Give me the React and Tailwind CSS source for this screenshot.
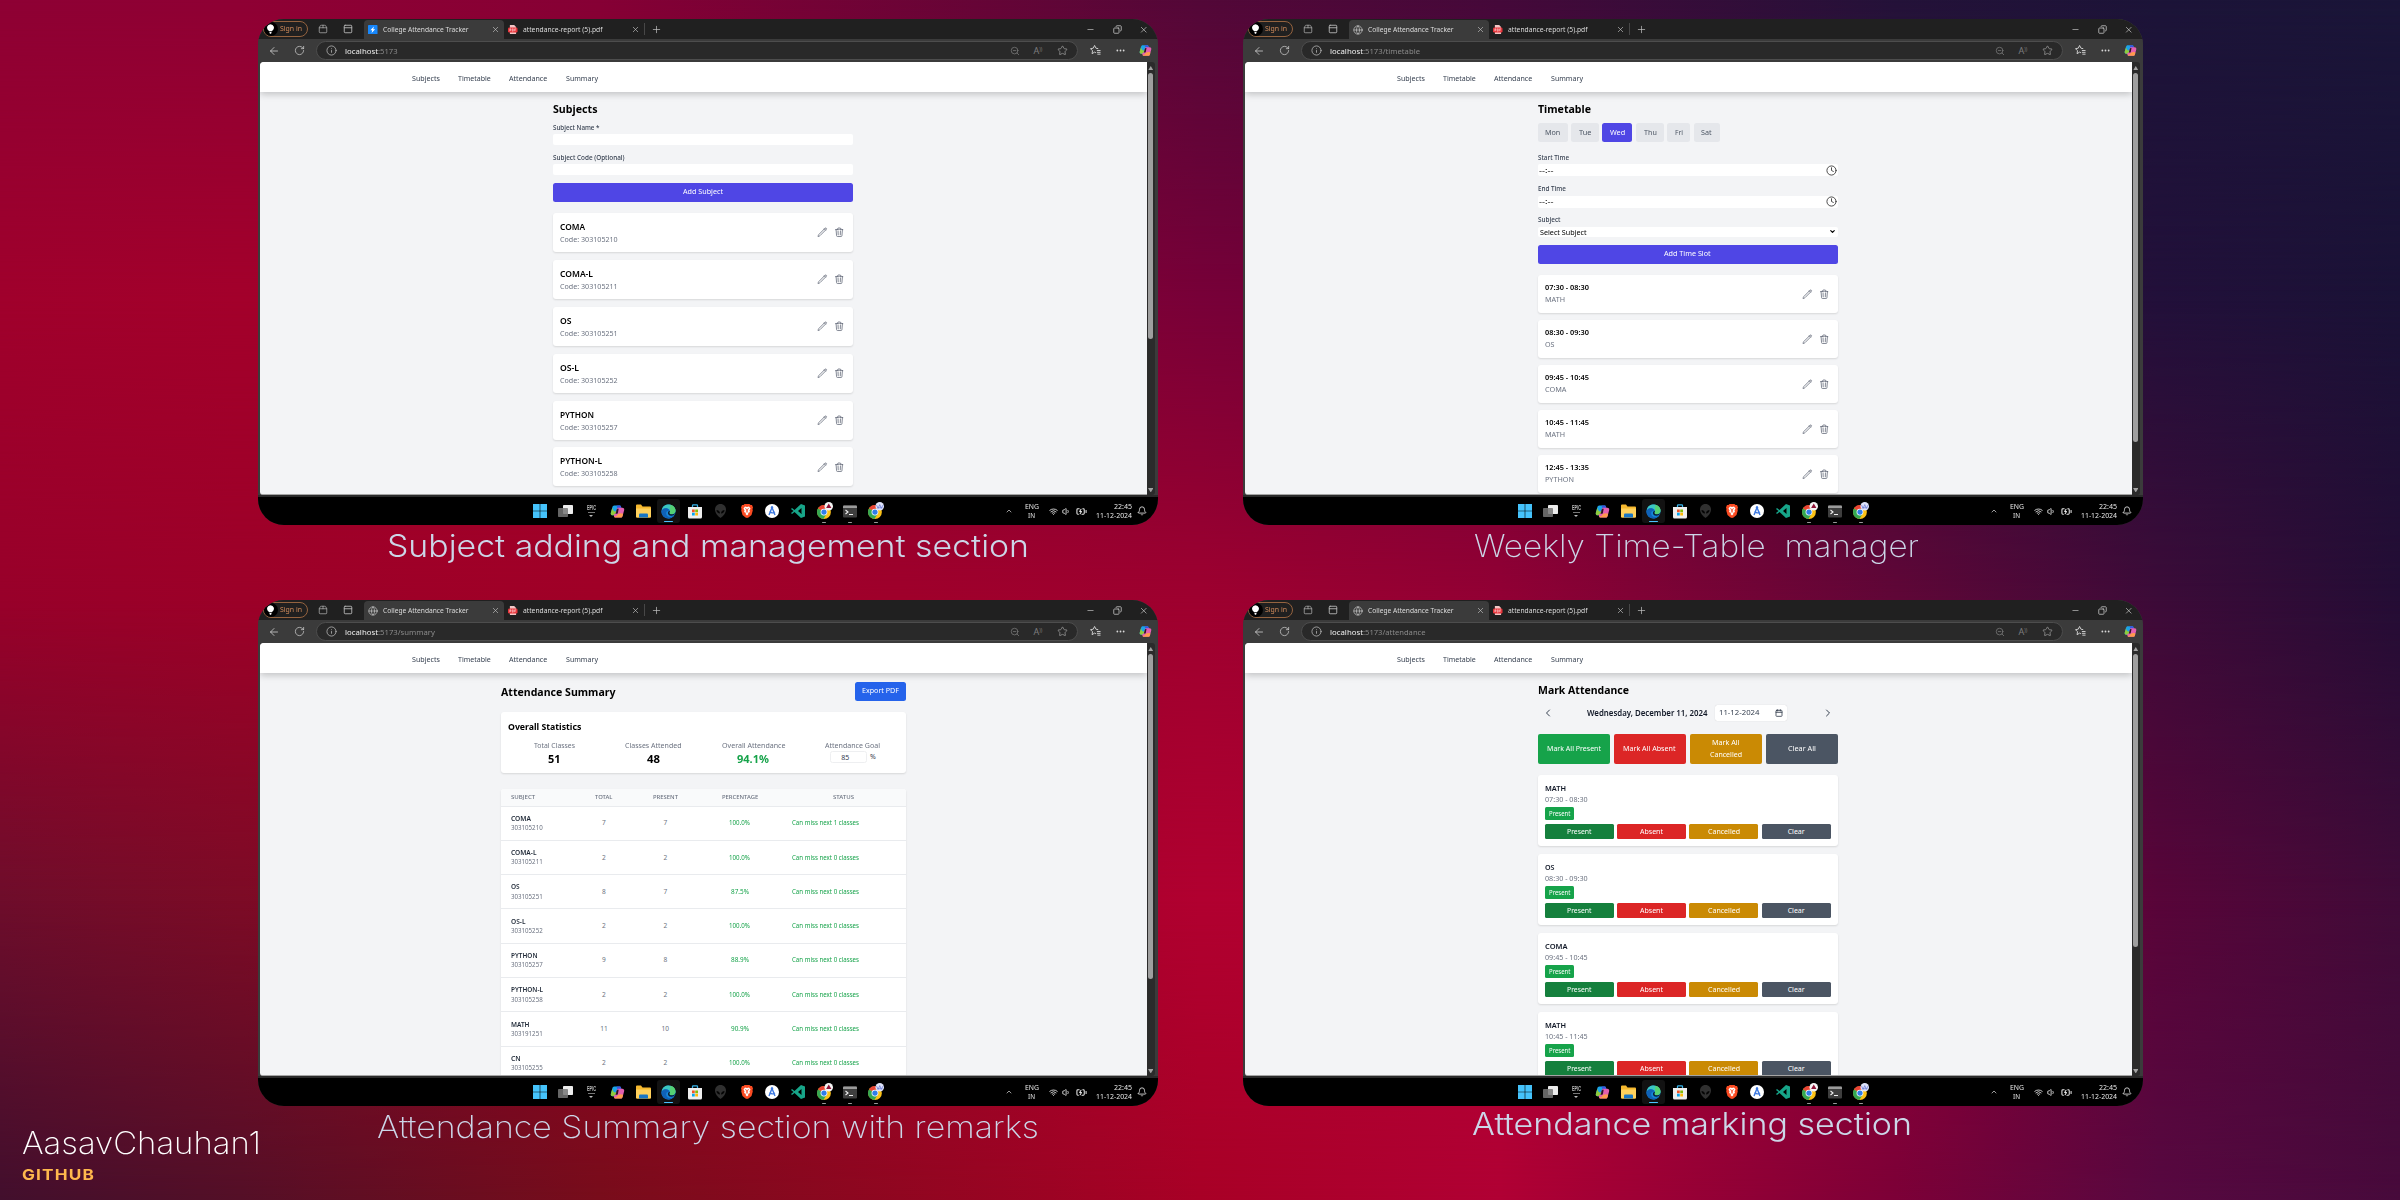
import React, { useLayoutEffect, useRef, useState } from "react";
import {
  ArrowLeft, Calendar, ChevronDown, ChevronLeft, ChevronRight, ChevronUp, Clock, Copy, Globe, Info,
  Minus, Package2, PanelTop, Plus, RotateCw, Star, Volume1, Wifi, X, ZoomOut, BatteryCharging, Bell,
} from "lucide-react";

/* Condenses (or widens) a run of text so that it fills the given width. */
function Fit({ w, className = "", children }) {
  const ref = useRef(null);
  const [scale, setScale] = useState(1);
  useLayoutEffect(() => {
    const el = ref.current;
    const applied = el.style.transform;
    el.style.transform = "none";
    const natural = el.getBoundingClientRect().width;
    el.style.transform = applied;
    setScale(w / natural);
  }, [w, children]);
  return (
    <span className={`inline-block text-left whitespace-pre ${className}`} style={{ width: `${w}px` }}>
      <span ref={ref} className="inline-block origin-left" style={{ transform: `scaleX(${scale})` }}>{children}</span>
    </span>
  );
}

/* ---------- Logos ---------- */

const Chrome = ({ badge }) => (
  <svg viewBox="0 0 32 32" className="size-[17px] overflow-visible">
    <circle cx="15" cy="17" r="13" fill="#fbc116" />
    <path d="M15 17 3.7 10.5A13 13 0 0 1 26.3 10.5L27 11H15Z" fill="#ea4335" />
    <path d="M3.7 10.5A13 13 0 0 0 14 30l6-10-5-3Z" fill="#34a853" />
    <circle cx="15" cy="17" r="6.4" fill="#fff" />
    <circle cx="15" cy="17" r="5" fill="#2f7de9" />
    <circle cx="24" cy="6" r="8" fill={badge === "a" ? "#f4f4f4" : "#dfe4fb"} />
    {badge === "a" ? <path d="m24 1 5 8.5H19Z" fill="#8e1236" /> : <path d="M18 4l3 6 3-7 3 7 3-6M19 9h10" stroke="#6f7fd6" strokeWidth="1.5" fill="none" />}
  </svg>
);

const Edge = () => (
  <svg viewBox="0 0 32 32" className="size-[15px]">
    <circle cx="16" cy="16" r="15" fill="#1585d8" />
    <path d="M1.500 14C3 5 9 1 16 1c9 0 15 6 15 13 0 5-4 8-8 8-3 0-5-1-5-3 0-1 1-2 1-4 0-3-4-6-8-6-5 0-8 3-9.500 5Z" fill="#3bc8c0" />
    <path d="M20 1.600C27 3 31 8 31 14c0 5-4 8-8 8-3 0-5-1-5-3 0-1 1-2 1-4Z" fill="#5fd65a" opacity=".75" />
    <path d="M1 15c2-5 6-6 9-6 4 0 8 2 9 6-5-2-8 1-8 5 0 6 6 9 11 7 2-.5 4-1.500 5-2-3 4-7 6-11 6C8 31 0 24 1 15Z" fill="#0f62b8" />
    <path d="M19 15c0 2-1 3-1 4 0 2 2 3 5 3 3 0 6-1 7-3 0 3-4 6-8 6-5 0-8-4-7-7 .5-2 2-3 4-3Z" fill="#0b1c33" />
  </svg>
);

const Copilot = ({ className }) => (
  <svg viewBox="0 0 32 32" className={className}>
    <path d="M9 3h11c2 0 3 1 3.500 3l1 4h-7c-2 0-3 1-3.500 3l-2 8c-.5 2-2 3-4 3H6c-4 0-5-3-4-6l3-11c.7-2.500 2-4 4-4Z" fill="#1aa3e8" />
    <path d="M5 8 2 18c-1 3 0 6 4 6h2c2 0 3.500-1 4-3l1.500-6C10 18 6 14 5 8Z" fill="#8fcb3c" />
    <path d="M14 3h6c2 0 3 1 3.500 3l1 4h-6c-3-1-4-4-4.500-7Z" fill="#3a55e0" />
    <path d="M23 29H12c-2 0-3-1-3.500-3L8 22c2 0 4-1 4.500-3l2-8c.5-2 2-3 4-3h7.500c4 0 5 3 4 6l-3 11c-.7 2.500-2 4-4 4Z" fill="#e35fb0" />
    <path d="M12 29h11c2 0 3.300-1.500 4-4l1-4c-6-3-12 0-13 3-1 2-4 3-6.500 2 .5 2 1.500 3 3.500 3Z" fill="#ff9a4d" />
    <path d="m14 14 1.500-4h3L17 18l-1 3h-4Z" fill="#000" opacity=".8" />
  </svg>
);

const Task = ({ children, active, dot }) => (
  <div className={`relative flex h-6 w-[23px] shrink-0 items-center justify-center rounded-[3px] ${active ? "bg-[#121212]" : ""}`}>
    {children}
    {active && <span className="absolute bottom-px h-[1.500px] w-[9px] rounded-full bg-[#4cc2ff]" />}
    {dot && <span className="absolute bottom-0 h-[1.500px] w-1 rounded-full bg-[#9a9a9a]" />}
  </div>
);

function Taskbar() {
  return (
    <footer className="flex h-7 items-center bg-black text-[#e8e8e8]">
      <div className="ml-[270.500px] flex items-center gap-[2.880px]">
        <Task>
          <svg viewBox="0 0 14 14" className="size-3.5 fill-[#45c3fb]"><path d="M0 0h6.700v6.700H0ZM7.300 0H14v6.700H7.300ZM0 7.300h6.700V14H0ZM7.300 7.300H14V14H7.300Z" /></svg>
        </Task>
        <Task>
          <svg viewBox="0 0 15 14" className="h-3.5 w-[15px]"><rect x="5" y="1" width="10" height="9" rx=".8" fill="#ececec" /><rect x="0" y="4" width="10" height="9" rx=".8" fill="#777" opacity=".85" /></svg>
        </Task>
        <Task>
          <div className="flex flex-col items-center font-['Liberation_Sans'] text-[#bdbdbd]">
            <span className="text-[6.500px] leading-[6px] font-bold"><Fit w={9}>EPIC</Fit></span>
            <span className="mt-px h-px w-[7px] bg-[#777]" />
            <svg viewBox="0 0 6 3" className="mt-[1.500px] h-[2px] w-1 fill-[#bbb]"><path d="M0 0h6L3 3Z" /></svg>
          </div>
        </Task>
        <Task><Copilot className="size-[15px]" /></Task>
        <Task>
          <svg viewBox="0 0 30 28" className="h-3.5 w-[15px]"><path d="M0 3q0-2 2-2h8l3 4h15q2 0 2 2v18q0 2-2 2H2q-2 0-2-2Z" fill="#f5b82e" /><path d="M0 9h30v16q0 2-2 2H2q-2 0-2-2Z" fill="#ffd15c" /><path d="M6 27v-6q0-2 2-2h14q2 0 2 2v6Z" fill="#1976c5" /></svg>
        </Task>
        <Task active><Edge /></Task>
        <Task>
          <svg viewBox="0 0 28 30" className="h-[15px] w-3.5"><path d="M9 7V3q0-1.500 1.500-1.500h7Q19 1.500 19 3v4" stroke="#37b4ea" strokeWidth="2.500" fill="none" /><path d="M0 6h28v20q0 3-3 3H3q-3 0-3-3Z" fill="#eee" /><path d="M8 11h5.500v5.500H8Z" fill="#f35325" /><path d="M14.500 11H20v5.500h-5.500Z" fill="#81bc06" /><path d="M8 17.500h5.500V23H8Z" fill="#05a6f0" /><path d="M14.500 17.500H20V23h-5.500Z" fill="#ffba08" /></svg>
        </Task>
        <Task>
          <svg viewBox="0 0 22 28" className="h-3.5 w-[11px]"><path d="M11 0C4 0 0 5 0 11c0 7 6 14 11 17 5-3 11-10 11-17C22 5 18 0 11 0Z" fill="#303030" /><path d="M3 12c4 0 7 3 7 7-4 0-7-3-7-7ZM19 12c-4 0-7 3-7 7 4 0 7-3 7-7Z" fill="#050505" /></svg>
        </Task>
        <Task>
          <svg viewBox="0 0 24 28" className="h-3.5 w-3"><path d="m5 2 2-2h10l2 2h3l2 5-1 3 .5 3L21 22l-6 5-3 1-3-1-6-5L.5 13 1 10 0 7l2-5Z" fill="#fb4b22" /><path d="m12 6 4-1 3 4-2 4 1 3-4 2 1 2-3 3-3-3 1-2-4-2 1-3-2-4 3-4Z" fill="#fff" /><path d="m8 9 3 1v4l1 3 1-3v-4l3-1" stroke="#fb4b22" strokeWidth="1.400" fill="none" /></svg>
        </Task>
        <Task>
          <svg viewBox="0 0 28 28" className="size-3.5"><circle cx="14" cy="14" r="14" fill="#fff" /><path d="m8 22 6-15 6 15M9 15q5 5 11 1" stroke="#3c78e0" strokeWidth="2.800" fill="none" /><circle cx="14" cy="7" r="2.400" fill="#3c78e0" /></svg>
        </Task>
        <Task>
          <svg viewBox="0 0 28 28" className="size-3.5"><path d="m20 0 8 3v22l-8 3L7 16l-5 4-2-2 5-4-5-4 2-2 5 4Zm1 8-7 6 7 6Z" fill="#17a589" fillRule="evenodd" /></svg>
        </Task>
        <Task dot><Chrome badge="a" /></Task>
        <Task dot>
          <svg viewBox="0 0 28 26" className="h-[13px] w-3.5"><rect width="28" height="24" y="1" rx="2" fill="#3e3e3e" /><path d="M0 6V3q0-2 2-2h24q2 0 2 2v3Z" fill="#9b9b9b" /><path d="m5 10 5 4-5 4M12 19h8" stroke="#eee" strokeWidth="2.200" fill="none" /></svg>
        </Task>
        <Task dot><Chrome badge="b" /></Task>
      </div>
      <div className="ml-auto flex items-center pr-[11px] text-[7px] leading-[9.500px]">
        <ChevronUp className="mr-[10.500px] size-2" />
        <div className="mr-[9px] flex w-4 flex-col items-center"><Fit w={14}>ENG</Fit><Fit w={7}>IN</Fit></div>
        <Wifi className="mr-1 size-[9px]" strokeWidth={2.300} />
        <Volume1 className="mr-[5.500px] size-[9px]" strokeWidth={2.300} />
        <BatteryCharging className="mr-[9px] size-[11px]" strokeWidth={2.300} />
        <div className="mr-[4.300px] flex flex-col items-end"><Fit w={18}>22:45</Fit><Fit w={36}>11-12-2024</Fit></div>
        <Bell className="size-[10px]" />
      </div>
    </footer>
  );
}

/* ---------- Browser window ---------- */

const Tab = ({ icon, title, w, active }) => (
  <div className={`flex h-[19px] w-[140px] items-center pl-1 ${active ? "rounded-t-[4px] bg-[#3b3b3b] text-[#dcdcdc]" : "text-[#dcdcdc]"}`}>
    <span className="flex size-[10px] items-center justify-center">{icon}</span>
    <span className="ml-[4.500px] text-[7px] leading-[10px]"><Fit w={w}>{title}</Fit></span>
    <X className="mr-1 ml-auto size-[9px] text-[#c4c4c4]" strokeWidth={1.7} />
  </div>
);

function BrowserChrome({ path, pathWidth, bolt }) {
  return (
    <header className="bg-[#3b3b3b]">
      <div className="flex h-5 items-end bg-[#202020]">
        <div className="mb-[2px] ml-[5px] flex h-4 w-[45.500px] items-center rounded-full border border-[#94633f] text-[7px] text-[#d08b5b]">
          <span className="flex size-[14px] shrink-0 items-center justify-center rounded-full bg-black">
            <svg viewBox="0 0 8 11" className="h-[10px] w-[7px] fill-white"><path d="M4 0a4 4 0 0 0-2.300 7.200L2.500 8h3l.8-.8A4 4 0 0 0 4 0ZM2.700 8.800h2.600L4.700 11H3.300Z" /></svg>
          </span>
          <span className="ml-[2.500px] leading-[10px]"><Fit w={22}>Sign in</Fit></span>
        </div>
        <div className="mb-[5px] ml-[10px] flex gap-[14.500px] text-[#b5b5b5]">
          <Package2 className="size-[10px]" strokeWidth={1.7} />
          <PanelTop className="size-[10px]" strokeWidth={2.2} />
        </div>
        <div className="ml-[11.500px] flex">
          <Tab
            active
            w={85.5}
            title="College Attendance Tracker"
            icon={bolt
              ? <svg viewBox="0 0 20 20" className="size-[9.500px]"><rect width="20" height="20" rx="1.500" fill="#1787fb" /><path d="M12.500 3 5 11h4l-1.500 6L15 9h-4Z" fill="#fff" /></svg>
              : <Globe className="size-[10px] text-[#cfcfcf]" strokeWidth={1.6} />}
          />
          <Tab
            w={79.5}
            title="attendance-report (5).pdf"
            icon={<svg viewBox="0 0 20 20" className="size-[9.500px]"><path d="M4 0h9l4 4v16H4Z" fill="#f3c6c6" /><rect x="0" y="5" width="20" height="11" rx="3" fill="#e8353b" /><path d="M4 8v5m0-5h2v3H4M9 8v5h2V8ZM14 13V8h3m-3 2.500h2.500" stroke="#fff" fill="none" /></svg>}
          />
        </div>
        <span className="mb-1 h-3 w-px bg-[#474747]" />
        <Plus className="mb-[4.500px] ml-1.5 size-[11px] text-[#c4c4c4]" strokeWidth={1.5} />
        <div className="mb-[5px] ml-auto flex gap-[17.500px] pr-[9px] text-[#cfcfcf]">
          <Minus className="size-[9px]" strokeWidth={1.700} />
          <Copy className="size-[9px] -scale-x-100" strokeWidth={2} />
          <X className="size-[9.500px]" strokeWidth={1.700} />
        </div>
      </div>
      <div className="flex h-[23px] items-center">
        <ArrowLeft className="ml-[10px] size-3 text-[#cfcfcf]" strokeWidth={1.6} />
        <RotateCw className="ml-3.5 size-[11px] text-[#cfcfcf]" strokeWidth={1.6} />
        <div className="ml-[11.500px] flex h-[19px] w-[762px] items-center rounded-full border border-[#4d4d4d] bg-[#292929] pl-[9px] text-[7.500px] leading-[12px]">
          <Info className="size-[11px] text-[#b9b9b9]" strokeWidth={1.700} />
          <span className="ml-[7.500px] text-[#f1f1f1]"><Fit w={33}>localhost</Fit></span>
          <span className="text-[#8a8a8a]"><Fit w={pathWidth}>{path}</Fit></span>
          <span className="mr-[9px] ml-auto flex items-center gap-[13.500px] text-[#7d7d7d]">
            <ZoomOut className="size-[10px]" strokeWidth={1.8} />
            <span className="flex w-[10px] text-[9px] leading-[10px]">A<span className="text-[5px] leading-[6px]">))</span></span>
            <Star className="size-[11px] text-[#9a9a9a]" strokeWidth={1.7} />
          </span>
        </div>
        <svg viewBox="0 0 24 24" className="ml-[11.500px] size-[11px] fill-none stroke-[#d8d8d8] stroke-2"><path d="m13 17-3-1.500L4.500 19l1-6.500L1 8l6-1 3-6 3 6 5 1M15 12h8M15 16h8M16 20h7" /></svg>
        <svg viewBox="0 0 10 3" className="ml-[15px] h-[3px] w-[9px] fill-[#d8d8d8]"><circle cx="1.500" cy="1.500" r="1" /><circle cx="5" cy="1.500" r="1" /><circle cx="8.500" cy="1.500" r="1" /></svg>
        <Copilot className="ml-[14px] size-[13px]" />
      </div>
    </header>
  );
}

function Window({ path, pathWidth, bolt, thumb, children }) {
  return (
    <section className="h-[506px] w-[900px] overflow-hidden rounded-[26px] bg-[#3b3b3b]">
      <BrowserChrome path={path} pathWidth={pathWidth} bolt={bolt} />
      <div className="flex h-[433px] pr-[3px] pl-[2.500px]">
        <main className="flex w-[886.500px] flex-col overflow-hidden rounded-tl-[4px] rounded-bl-[3px] border-b border-[#a5a5a5] bg-[#f3f4f6]">
          <nav className="z-10 flex h-[30px] shrink-0 items-center gap-[18.500px] bg-white pt-[3px] pl-[151.500px] text-[7.500px] text-[#374151] shadow-[0_2px_7px_rgba(0,0,0,0.22)]">
            <Fit w={28}>Subjects</Fit>
            <Fit w={32.8}>Timetable</Fit>
            <Fit w={38.2}>Attendance</Fit>
            <Fit w={32}>Summary</Fit>
          </nav>
          {children}
        </main>
        <aside className="flex w-2 flex-col items-center rounded-r-[3px] bg-[#2b2b2b] pt-[3.500px]">
          <svg viewBox="0 0 6 5" className="h-[4.500px] w-[5.500px] shrink-0 fill-[#a3a3a3]"><path d="M3 0 6 5H0Z" /></svg>
          <span className={`mt-[3px] w-[5px] rounded-full bg-[#9f9f9f] ${thumb}`} />
          <svg viewBox="0 0 6 5" className="mt-auto mb-[3px] h-[4.500px] w-[5.500px] shrink-0 fill-[#a3a3a3]"><path d="M3 5 6 0H0Z" /></svg>
        </aside>
      </div>
      <div className="h-[2px] bg-[#2a2a2a]" />
      <Taskbar />
    </section>
  );
}

/* ---------- Screens ---------- */

const Actions = () => (
  <span className="flex gap-[6.500px] pr-px text-[#6b7280]">
    <svg viewBox="0 0 24 24" className="size-[10.500px] fill-none stroke-current stroke-[1.900]" strokeLinecap="round" strokeLinejoin="round">
      <path d="m16.862 4.487 1.687-1.688a1.875 1.875 0 1 1 2.652 2.652L6.832 19.820a4.500 4.500 0 0 1-1.897 1.130l-2.685.8.8-2.685a4.500 4.500 0 0 1 1.130-1.897L16.863 4.487Zm0 0L19.500 7.125" />
    </svg>
    <svg viewBox="0 0 24 24" className="size-[10.500px] fill-none stroke-current stroke-[1.900]" strokeLinecap="round" strokeLinejoin="round">
      <path d="m14.740 9-.346 9m-4.788 0L9.260 9m9.968-3.210c.342.052.682.107 1.022.166m-1.022-.165L18.160 19.673a2.250 2.250 0 0 1-2.244 2.077H8.084a2.250 2.250 0 0 1-2.244-2.077L4.772 5.790m14.456 0a48.108 48.108 0 0 0-3.478-.397m-12 .562c.340-.059.680-.114 1.022-.165m0 0a48.110 48.110 0 0 1 3.478-.397m7.500 0v-.916c0-1.180-.910-2.164-2.090-2.201a51.964 51.964 0 0 0-3.320 0c-1.180.037-2.090 1.022-2.090 2.201v.916m7.500 0a48.667 48.667 0 0 0-7.500 0" />
    </svg>
  </span>
);

const card = "rounded-[3px] bg-white shadow-[0_1px_2px_rgba(0,0,0,0.12)]";

const subjects = [
  ["COMA", 25, "303105210"], ["COMA-L", 33, "303105211"], ["OS", 11.5, "303105251"],
  ["OS-L", 19, "303105252"], ["PYTHON", 34, "303105257"], ["PYTHON-L", 42, "303105258"],
];

const SubjectsScreen = () => (
  <div className="ml-[292.500px] w-[300.500px]">
    <h1 className="mt-[9px] h-[15px] text-[11.250px] leading-[15px] font-bold text-black"><Fit w={44.5}>Subjects</Fit></h1>
    <div className="mt-[6.500px] h-[9.500px] text-[6.560px] leading-[9.500px] font-medium text-[#374151]"><Fit w={46.5}>Subject Name *</Fit></div>
    <div className="mt-[2px] h-[11px] rounded-[2px] bg-white" />
    <div className="mt-[7.500px] h-[9.500px] text-[6.560px] leading-[9.500px] font-medium text-[#374151]"><Fit w={71.5}>Subject Code (Optional)</Fit></div>
    <div className="mt-[2px] h-[11px] rounded-[2px] bg-white" />
    <button className="mt-[7.500px] flex h-[19px] w-full items-center justify-center rounded-[2.500px] bg-[#4f46e5] text-[7.500px] text-white"><Fit w={40}>Add Subject</Fit></button>
    <ul className="mt-[11.500px] flex flex-col gap-[7.900px]">
      {subjects.map(([name, w, code]) => (
        <li key={name} className={`flex h-[39px] items-center justify-between px-[7.500px] ${card}`}>
          <div>
            <div className="text-[8.440px] leading-[13px] font-semibold text-black"><Fit w={w}>{name}</Fit></div>
            <div className="text-[7.500px] leading-[12px] text-[#6b7280]"><Fit w={57.7}>{`Code: ${code}`}</Fit></div>
          </div>
          <Actions />
        </li>
      ))}
    </ul>
  </div>
);

const days = [["Mon", 15.3], ["Tue", 12.4], ["Wed", 15.2], ["Thu", 12.8], ["Fri", 8], ["Sat", 10.6]];
const slots = [
  ["07:30 - 08:30", "MATH", 20], ["08:30 - 09:30", "OS", 9.5], ["09:45 - 10:45", "COMA", 21.5],
  ["10:45 - 11:45", "MATH", 20], ["12:45 - 13:35", "PYTHON", 29],
];

const TimeField = ({ label, w }) => (
  <>
    <div className="h-[9.500px] text-[6.560px] leading-[9.500px] font-medium text-[#374151]"><Fit w={w}>{label}</Fit></div>
    <div className="mt-[2px] mb-2 flex h-[12px] items-center justify-between rounded-[2px] bg-white px-px text-[7.500px] leading-[11px] text-black">
      <Fit w={14.5}>--:--</Fit>
      <Clock className="size-[11px] text-[#333]" strokeWidth={1.900} />
    </div>
  </>
);

const TimetableScreen = () => (
  <div className="ml-[292.500px] w-[300.500px]">
    <h1 className="mt-[9px] h-[15px] text-[11.250px] leading-[15px] font-bold text-black"><Fit w={53}>Timetable</Fit></h1>
    <div className="mt-[6.500px] mb-[11px] flex gap-[3.550px]">
      {days.map(([day, w]) => (
        <button key={day} className={`h-[19px] rounded-[2.500px] px-[7.500px] text-[7.500px] leading-[19px] ${day === "Wed" ? "bg-[#4f46e5] text-white" : "bg-[#e5e7eb] text-[#4b5563]"}`}><Fit w={w}>{day}</Fit></button>
      ))}
    </div>
    <TimeField label="Start Time" w={31} />
    <TimeField label="End Time" w={28} />
    <div className="-mt-[0.500px] h-[9.500px] text-[6.560px] leading-[9.500px] font-medium text-[#374151]"><Fit w={22.5}>Subject</Fit></div>
    <div className="mt-[2px] flex h-[10.500px] items-center justify-between rounded-[2px] bg-white px-[2px] text-[7.500px] leading-[10px] text-black">
      <Fit w={46.5}>Select Subject</Fit>
      <ChevronDown className="size-[7px]" strokeWidth={4} />
    </div>
    <button className="mt-[7.500px] flex h-[19px] w-full items-center justify-center rounded-[2.500px] bg-[#4f46e5] text-[7.500px] text-white"><Fit w={46.7}>Add Time Slot</Fit></button>
    <ul className="mt-[11.500px] flex flex-col gap-[7.500px]">
      {slots.map(([time, name, w]) => (
        <li key={time} className={`flex h-[37.500px] items-center justify-between px-[7.500px] ${card}`}>
          <div>
            <div className="text-[7.500px] leading-[11.500px] font-semibold text-black"><Fit w={44}>{time}</Fit></div>
            <div className="text-[7.500px] leading-[11.500px] text-[#6b7280]"><Fit w={w}>{name}</Fit></div>
          </div>
          <Actions />
        </li>
      ))}
    </ul>
  </div>
);

const rows = [
  ["COMA", 20, "303105210", "7", "7", "100.0%", "1"],
  ["COMA-L", 25.5, "303105211", "2", "2", "100.0%", "0"],
  ["OS", 8.7, "303105251", "8", "7", "87.5%", "0"],
  ["OS-L", 14.5, "303105252", "2", "2", "100.0%", "0"],
  ["PYTHON", 26.5, "303105257", "9", "8", "88.9%", "0"],
  ["PYTHON-L", 32, "303105258", "2", "2", "100.0%", "0"],
  ["MATH", 18.5, "303191251", "11", "10", "90.9%", "0"],
  ["CN", 9.7, "303105255", "2", "2", "100.0%", "0"],
];

const cols = "grid grid-cols-[82.300px_42px_80.600px_68.200px_1fr] items-center";

const SummaryScreen = () => (
  <div className="ml-[240.700px] w-[405.500px]">
    <div className="mt-[9px] flex h-[19px] items-center justify-between">
      <h1 className="text-[11.250px] leading-[15px] font-bold text-black"><Fit w={114.5}>Attendance Summary</Fit></h1>
      <button className="-mt-px flex h-[19px] w-[51.700px] items-center justify-center rounded-[2.500px] bg-[#2563eb] text-[7.500px] text-white"><Fit w={37}>Export PDF</Fit></button>
    </div>
    <div className={`mt-[10.500px] h-[61px] px-[3.500px] pt-2 ${card}`}>
      <h2 className="ml-[3.500px] text-[9.380px] leading-[13px] font-bold text-black"><Fit w={73.3}>Overall Statistics</Fit></h2>
      <div className="mt-[7px] grid grid-cols-4 text-center text-[7px] leading-[11px] text-[#6b7280]">
        <div><Fit w={41}>Total Classes</Fit><div className="text-[11.250px] leading-[15px] font-bold text-black"><Fit w={12.5}>51</Fit></div></div>
        <div><Fit w={56.5}>Classes Attended</Fit><div className="text-[11.250px] leading-[15px] font-bold text-black"><Fit w={13}>48</Fit></div></div>
        <div><Fit w={63.5}>Overall Attendance</Fit><div className="text-[11.250px] leading-[15px] font-bold text-[#16a34a]"><Fit w={32}>94.1%</Fit></div></div>
        <div>
          <Fit w={55}>Attendance Goal</Fit>
          <div className="flex h-[12px] items-center justify-center gap-[2.500px] text-[#374151]">
            <span className="h-[12px] w-[37.500px] rounded-[2.500px] border border-[#eeeff1] pr-[7px] leading-[11px]">85</span>%
          </div>
        </div>
      </div>
    </div>
    <div className={`mt-4 h-[400px] overflow-hidden ${card}`}>
      <div className={`h-[18px] border-b border-[#e9ebee] bg-[#f9fafb] text-center text-[5.800px] font-medium text-[#6b7280] ${cols}`}>
        <span className="pl-[10.600px] text-left"><Fit w={24.3}>SUBJECT</Fit></span>
        <span><Fit w={17.5}>TOTAL</Fit></span>
        <span><Fit w={25}>PRESENT</Fit></span>
        <span><Fit w={36.3}>PERCENTAGE</Fit></span>
        <span className="pl-[7px]"><Fit w={21}>STATUS</Fit></span>
      </div>
      {rows.map(([name, w, code, total, present, pct, miss]) => (
        <div key={name} className={`h-[34.320px] border-b border-[#e9ebee] text-center text-[6.560px] text-[#6b7280] ${cols}`}>
          <div className="pl-[10.600px] text-left">
            <div className="text-[6.560px] leading-[9.500px] font-semibold text-[#1f2937]"><Fit w={w}>{name}</Fit></div>
            <div className="text-[6.560px] leading-[9.500px]"><Fit w={31.7}>{code}</Fit></div>
          </div>
          <span>{total}</span>
          <span>{present}</span>
          <span className="text-[#16a34a]"><Fit w={pct.length > 5 ? 21 : 18}>{pct}</Fit></span>
          <span className="pl-[18.500px] text-left text-[#16a34a]"><Fit w={67}>{`Can miss next ${miss} classes`}</Fit></span>
        </div>
      ))}
    </div>
  </div>
);

const classes = [["MATH", 21, "07:30 - 08:30"], ["OS", 9.5, "08:30 - 09:30"], ["COMA", 22.5, "09:45 - 10:45"], ["MATH", 21, "10:45 - 11:45"]];

const AttendanceScreen = () => (
  <div className="ml-[292.500px] w-[300.500px]">
    <h1 className="mt-[8.500px] h-[15px] text-[11.250px] leading-[15px] font-bold text-black"><Fit w={91}>Mark Attendance</Fit></h1>
    <div className="mt-2 flex h-[16.500px] items-center">
      <ChevronLeft className="ml-[4px] size-[12px] text-[#374151]" />
      <span className="ml-[33.500px] text-[8.440px] leading-[13px] font-semibold text-[#111827]"><Fit w={120.5}>Wednesday, December 11, 2024</Fit></span>
      <span className="ml-[7.500px] flex h-[16.500px] w-[72px] items-center justify-between rounded-[2.500px] bg-white px-1 text-[7.500px] text-[#374151] shadow-[0_0_1px_rgba(0,0,0,0.2)]">
        <Fit w={40.5}>11-12-2024</Fit>
        <Calendar className="size-[8px]" strokeWidth={2.500} />
      </span>
      <ChevronRight className="mr-[4px] ml-auto size-[12px] text-[#374151]" />
    </div>
    <div className="mt-[12.500px] grid h-[30.500px] grid-cols-4 gap-[3.600px] text-center text-[7.500px] leading-[11.300px] text-white">
      <button className="rounded-[2px] bg-[#16a34a]"><Fit w={54}>Mark All Present</Fit></button>
      <button className="rounded-[2px] bg-[#dc2626]"><Fit w={52.5}>Mark All Absent</Fit></button>
      <button className="rounded-[2px] bg-[#ca8a04]"><Fit w={27.5}>Mark All</Fit><br /><Fit w={32}>Cancelled</Fit></button>
      <button className="rounded-[2px] bg-[#4b5563]"><Fit w={28}>Clear All</Fit></button>
    </div>
    <ul className="mt-[11.300px] flex flex-col gap-2">
      {classes.map(([name, w, time]) => (
        <li key={time} className={`h-[71px] px-[7.300px] pt-[7px] ${card}`}>
          <div className="h-[12px] text-[7.500px] leading-[12px] font-semibold text-[#111827]"><Fit w={w}>{name}</Fit></div>
          <div className="h-[11px] text-[7.500px] leading-[11px] text-[#6b7280]"><Fit w={42.7}>{time}</Fit></div>
          <div className="mt-[1.700px] flex h-[13px] w-[29px] items-center justify-center rounded-[1.500px] bg-[#16a34a] text-[6.560px] text-white"><Fit w={21.5}>Present</Fit></div>
          <div className="mt-1 grid h-[15px] grid-cols-4 gap-[3.300px] text-[7px] text-white">
            <button className="rounded-[1.500px] bg-[#15803d] leading-[15px]"><Fit w={24.5}>Present</Fit></button>
            <button className="rounded-[1.500px] bg-[#dc2626] leading-[15px]"><Fit w={23}>Absent</Fit></button>
            <button className="rounded-[1.500px] bg-[#ca8a04] leading-[15px]"><Fit w={32}>Cancelled</Fit></button>
            <button className="rounded-[1.500px] bg-[#4b5563] leading-[15px]"><Fit w={17}>Clear</Fit></button>
          </div>
        </li>
      ))}
    </ul>
  </div>
);

/* ---------- Poster ---------- */

/* Horizontal colour bands cross-faded down the page. */
const Backdrop = () => (
  <>
    <div className="[grid-area:1/1] bg-[linear-gradient(90deg,#8e0034_0%,#8f0034_10%,#860035_25%,#530838_50%,#45093a_62.5%,#241239_79%,#1c1438_90%,#1a1538_100%)]" />
    <div className="[grid-area:1/1] bg-[linear-gradient(90deg,#a0002c_0%,#a3002b_10%,#a0002b_25%,#780038_50%,#6a0038_62.5%,#3a0c38_79%,#22103a_90%,#1a1236_100%)] [mask-image:linear-gradient(180deg,transparent_0%,black_25%)]" />
    <div className="[grid-area:1/1] bg-[linear-gradient(90deg,#98002a_0%,#9c0028_10%,#a00027_25%,#9e002f_50%,#920034_62.5%,#600637_79%,#3c0b38_90%,#240d35_100%)] [mask-image:linear-gradient(180deg,transparent_25%,black_50%)]" />
    <div className="[grid-area:1/1] bg-[linear-gradient(90deg,#6e0d2b_0%,#7c0b26_10%,#920022_25%,#b10030_50%,#b20033_62.5%,#8c0038_79%,#580539_90%,#400b38_100%)] [mask-image:linear-gradient(180deg,transparent_50%,black_75%)]" />
    <div className="[grid-area:1/1] bg-[linear-gradient(90deg,#420f2d_0%,#540f27_10%,#780c1b_25%,#a80026_50%,#b00034_62.5%,#7c0037_79%,#570840_90%,#470a3b_100%)] [mask-image:linear-gradient(180deg,transparent_75%,black_100%)]" />
  </>
);

const Shot = ({ caption, width, className, children, ...win }) => (
  <figure className="h-[581px] w-[900px]">
    <Window {...win}>{children}</Window>
    <figcaption className={`text-[31px] leading-[40px] text-[#ccd6e8] ${className}`}><Fit w={width}>{caption}</Fit></figcaption>
  </figure>
);

export default function App() {
  return (
    <div className="grid h-[1200px] w-[2400px] grid-cols-[2400px] grid-rows-[1200px] overflow-hidden font-['Noto_Sans',sans-serif]">
      <Backdrop />
      <div className="relative flex [grid-area:1/1]">
        <div className="z-10 flex w-[257.500px] shrink-0 flex-col justify-end pb-[15.500px] pl-[21.500px] font-['Inter',sans-serif]">
          <div className="text-[31px] leading-[40px] font-extralight text-white"><Fit w={239}>AasavChauhan1</Fit></div>
          <div className="mt-[2px] text-[15px] leading-[20px] font-bold tracking-[1px] text-[#ffb84d]"><Fit w={73}>GITHUB</Fit></div>
        </div>
        <div className="grid auto-rows-[581px] grid-cols-[900px_900px] content-start gap-x-[85px] pt-[19px]">
          <Shot caption="Subject adding and management section" width={642} className="pl-[129px] pt-px font-['Inter',sans-serif] font-light" path=":5173" pathWidth={19.5} bolt thumb="h-[266px]">
            <SubjectsScreen />
          </Shot>
          <Shot caption="Weekly Time-Table  manager" width={445} className="pl-[231px] pt-px font-['Inter',sans-serif] font-extralight" path=":5173/timetable" pathWidth={57} thumb="h-[369px]">
            <TimetableScreen />
          </Shot>
          <Shot caption="Attendance Summary section with remarks" width={662} className="pl-[119px] pt-px font-['Inter',sans-serif] font-extralight" path=":5173/summary" pathWidth={57} thumb="h-[325px]">
            <SummaryScreen />
          </Shot>
          <Shot caption="Attendance marking section" width={440} className="-mt-[3px] pl-[229.500px] pt-px font-['Inter',sans-serif] font-light" path=":5173/attendance" pathWidth={62.5} thumb="h-[293px]">
            <AttendanceScreen />
          </Shot>
        </div>
      </div>
    </div>
  );
}
